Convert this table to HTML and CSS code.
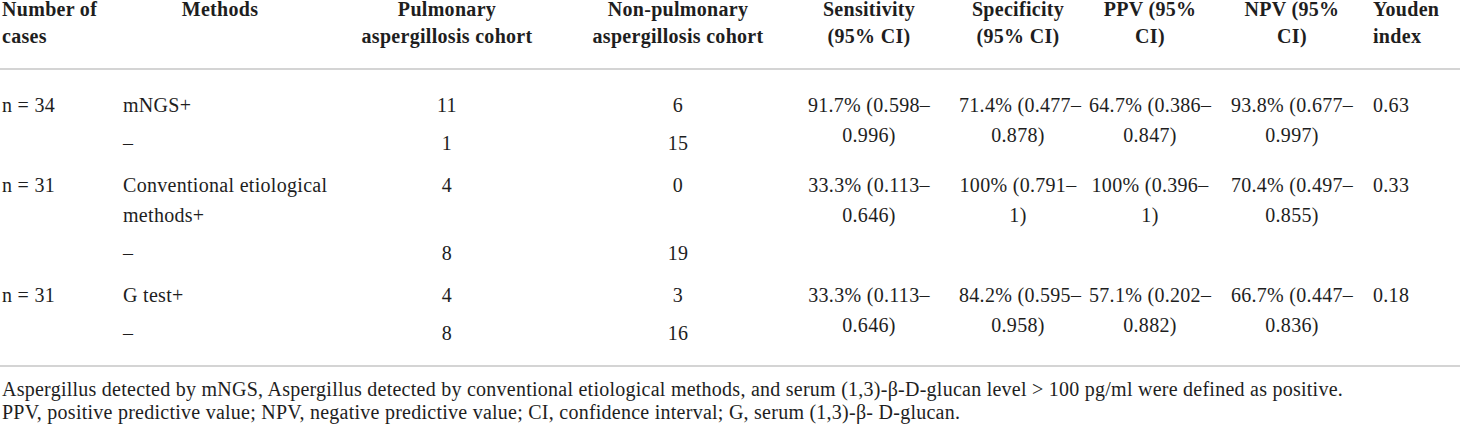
FILE: index.html
```html
<!DOCTYPE html>
<html lang="en">

<head>
  <meta charset="UTF-8">
  <title>Diagnostic performance</title>
  <link rel="stylesheet" href="styles.css">
</head>

<body>
  <table class="results">
    <colgroup>
      <col class="c-cases">
      <col class="c-method">
      <col class="c-pulm">
      <col class="c-nonpulm">
      <col class="c-sens">
      <col class="c-spec">
      <col class="c-ppv">
      <col class="c-npv">
      <col class="c-youden">
    </colgroup>
    <thead>
      <tr>
        <th class="first">Number of<br>cases</th>
        <th>Methods</th>
        <th>Pulmonary<br>aspergillosis cohort</th>
        <th>Non-pulmonary<br>aspergillosis cohort</th>
        <th>Sensitivity<br>(95% CI)</th>
        <th>Specificity<br>(95% CI)</th>
        <th>PPV (95%<br>CI)</th>
        <th>NPV (95%<br>CI)</th>
        <th class="left">Youden<br>index</th>
      </tr>
    </thead>
    <tbody>
      <tr class="group top">
        <td class="first" rowspan="2">n = 34</td>
        <td class="left">mNGS+</td>
        <td>11</td>
        <td>6</td>
        <td rowspan="2">91.7% (0.598–<br>0.996)</td>
        <td rowspan="2">71.4% (0.477–<br>0.878)</td>
        <td rowspan="2">64.7% (0.386–<br>0.847)</td>
        <td rowspan="2">93.8% (0.677–<br>0.997)</td>
        <td class="left" rowspan="2">0.63</td>
      </tr>
      <tr>
        <td class="left">–</td>
        <td>1</td>
        <td>15</td>
      </tr>
      <tr class="group">
        <td class="first" rowspan="2">n = 31</td>
        <td class="left">Conventional etiological<br>methods+</td>
        <td>4</td>
        <td>0</td>
        <td rowspan="2">33.3% (0.113–<br>0.646)</td>
        <td rowspan="2">100% (0.791–<br>1)</td>
        <td rowspan="2">100% (0.396–<br>1)</td>
        <td rowspan="2">70.4% (0.497–<br>0.855)</td>
        <td class="left" rowspan="2">0.33</td>
      </tr>
      <tr>
        <td class="left">–</td>
        <td>8</td>
        <td>19</td>
      </tr>
      <tr class="group">
        <td class="first" rowspan="2">n = 31</td>
        <td class="left">G test+</td>
        <td>4</td>
        <td>3</td>
        <td rowspan="2">33.3% (0.113–<br>0.646)</td>
        <td rowspan="2">84.2% (0.595–<br>0.958)</td>
        <td rowspan="2">57.1% (0.202–<br>0.882)</td>
        <td rowspan="2">66.7% (0.447–<br>0.836)</td>
        <td class="left" rowspan="2">0.18</td>
      </tr>
      <tr class="last">
        <td class="left">–</td>
        <td>8</td>
        <td>16</td>
      </tr>
    </tbody>
  </table>

  <div class="notes">
    <p>Aspergillus detected by mNGS, Aspergillus detected by conventional etiological methods, and serum (1,3)-β-D-glucan level &gt; 100 pg/ml were defined as positive.</p>
    <p>PPV, positive predictive value; NPV, negative predictive value; CI, confidence interval; G, serum (1,3)-β- D-glucan.</p>
  </div>
</body>

</html>
```

FILE: styles.css
```css
body {
  margin: 0;
  background: #fff;
  color: #1e1e1e;
  font-family: "Liberation Serif", "Times New Roman", serif;
  overflow: hidden;
}

.results {
  width: 1460px;
  table-layout: fixed;
  border-collapse: collapse;
  margin-top: -4px;
  font-size: 20px;
  letter-spacing: 0.3px;
}

.c-cases { width: 117px; }
.c-method { width: 206px; }
.c-pulm { width: 248px; }
.c-nonpulm { width: 214px; }
.c-sens { width: 168px; }
.c-spec { width: 130px; }
.c-ppv { width: 134px; }
.c-npv { width: 150px; }
.c-youden { width: 93px; }

thead {
  border-bottom: 2px solid #d4d4d4;
}

tbody {
  border-bottom: 2px solid #d4d4d4;
}

th,
td {
  padding: 0 6px;
  text-align: center;
  vertical-align: top;
  white-space: nowrap;
}

th {
  font-weight: bold;
  line-height: 27px;
  padding-bottom: 18px;
}

td {
  line-height: 30px;
  padding-top: 4px;
  padding-bottom: 4px;
}

.left {
  text-align: left;
}

.first {
  padding-left: 2px;
  text-align: left;
}

.group td {
  padding-top: 8px;
}

.group.top td {
  padding-top: 20px;
}

.last td {
  padding-bottom: 17px;
}

.notes {
  padding-top: 11px;
  font-size: 20px;
  line-height: 23px;
  letter-spacing: 0.25px;
}

.notes p {
  margin: 0;
  padding-left: 2px;
}
```
